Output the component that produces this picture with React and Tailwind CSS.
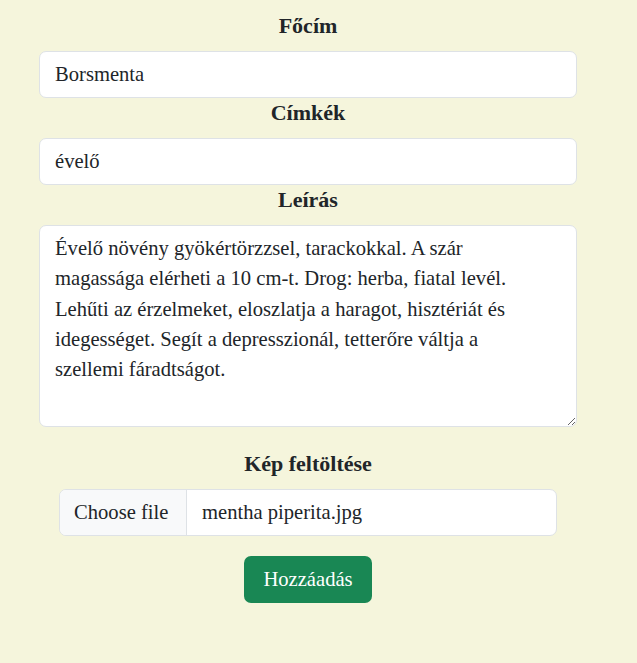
const LEIRAS = [
  'Évelő növény gyökértörzzsel, tarackokkal. A szár',
  'magassága elérheti a 10 cm-t. Drog: herba, fiatal levél.',
  'Lehűti az érzelmeket, eloszlatja a haragot, hisztériát és',
  'idegességet. Segít a depresszionál, tetterőre váltja a',
  'szellemi fáradtságot.',
].join('\n')

function Label({ children, className = '' }) {
  return (
    <label className={`block text-center font-bold text-[22px] leading-[30px] mb-[10px] ${className}`}>
      {children}
    </label>
  )
}

export default function App() {
  return (
    <div className="min-h-[663px] bg-[#f5f5dc] text-[#212529] font-['Liberation_Serif',serif] text-[20.6px]">
      <form className="ml-[39px] w-[538px] pt-[11px] flex flex-col" onSubmit={e => e.preventDefault()}>
        <Label>Főcím</Label>
        <input
          type="text"
          defaultValue="Borsmenta"
          className="h-[47px] px-[15px] bg-white border border-[#dee2e6] rounded-[7px] leading-[30px] outline-none"
        />

        <Label>Címkék</Label>
        <input
          type="text"
          defaultValue="évelő"
          className="h-[47px] px-[15px] bg-white border border-[#dee2e6] rounded-[7px] leading-[30px] outline-none"
        />

        <Label>Leírás</Label>
        <textarea
          defaultValue={LEIRAS}
          className="h-[202px] px-[15px] py-[7px] bg-white border border-[#dee2e6] rounded-[7px] leading-[30.3px] outline-none"
        />

        <Label className="mt-[22px]">Kép feltöltése</Label>
        <div className="mx-[20px] h-[47px] flex bg-white border border-[#dee2e6] rounded-[7px] overflow-hidden">
          <div className="w-[127px] shrink-0 bg-[#f8f9fa] border-r border-[#dee2e6] pl-[14px] flex items-center">
            Choose file
          </div>
          <div className="pl-[15px] flex items-center">mentha piperita.jpg</div>
        </div>

        <div className="flex justify-center mt-[20px]">
          <button
            type="submit"
            className="w-[128px] h-[47px] bg-[#198754] text-white rounded-[7px]"
          >
            Hozzáadás
          </button>
        </div>
      </form>
    </div>
  )
}
